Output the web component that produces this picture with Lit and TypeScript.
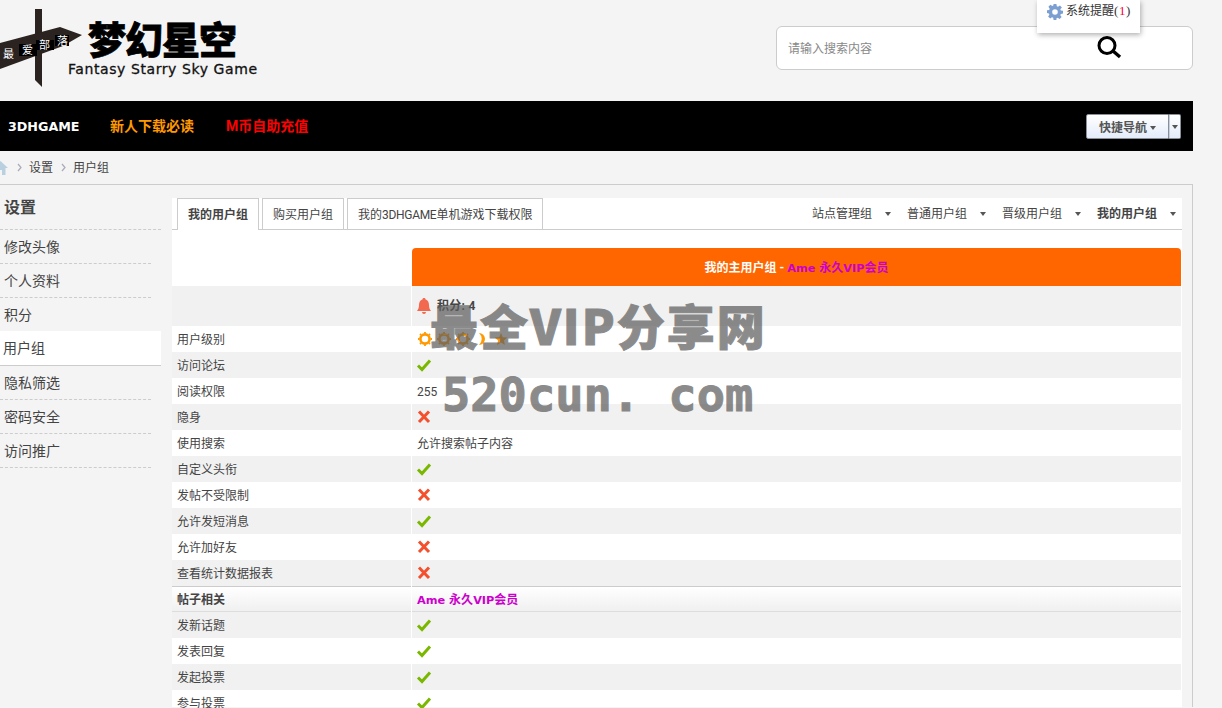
import { LitElement, html, css, svg } from "lit";
import { customElement } from "lit/decorators.js";

const check = html`<svg class="ic" width="16" height="14" viewBox="0 0 16 14"><path d="M2 7.500 L6 11.500 L14 2.500" fill="none" stroke="#7ab800" stroke-width="3"/></svg>`;
const cross = html`<svg class="ic" width="16" height="14" viewBox="0 0 16 14"><path d="M3 1.500 L13 12 M13 1.500 L3 12" fill="none" stroke="#f4502e" stroke-width="3"/></svg>`;

const sun = svg`<circle cx="7" cy="7" r="4.600" fill="none" stroke="#f90" stroke-width="2.600"/><path stroke="#f90" stroke-width="1.800" d="M7 0v1.500M7 12.500v1.500M0 7h1.500M12.500 7h1.500M2 2l1 1M11 11l1 1M12 2l-1 1M3 11l-1 1"/>`;
const levelIcons = html`<span class="levels">
  <svg width="14" height="14" viewBox="0 0 14 14">${sun}</svg>
  <svg width="14" height="14" viewBox="0 0 14 14">${sun}</svg>
  <svg width="14" height="14" viewBox="0 0 14 14">${sun}</svg>
  <svg class="moon" width="12" height="14" viewBox="0 0 12 14"><path d="M2 1 A6 6 0 1 1 2 13 A8 8 0 0 0 2 1Z" fill="#f90"/></svg>
  <svg width="14" height="14" viewBox="0 0 14 14"><path d="M7 1 L8.800 5.200 L13.400 5.500 L9.900 8.400 L11 13 L7 10.500 L3 13 L4.100 8.400 L.6 5.500 L5.200 5.200Z" fill="#f90"/></svg>
</span>`;

type Row = { label: string; value: unknown; gray?: boolean };
const rows: Row[] = [
  { label: "用户级别", value: levelIcons },
  { label: "访问论坛", value: check, gray: true },
  { label: "阅读权限", value: "255" },
  { label: "隐身", value: cross, gray: true },
  { label: "使用搜索", value: "允许搜索帖子内容" },
  { label: "自定义头衔", value: check, gray: true },
  { label: "发帖不受限制", value: cross },
  { label: "允许发短消息", value: check, gray: true },
  { label: "允许加好友", value: cross },
  { label: "查看统计数据报表", value: cross, gray: true },
];
const rows2: Row[] = [
  { label: "发新话题", value: check, gray: true },
  { label: "发表回复", value: check },
  { label: "发起投票", value: check, gray: true },
  { label: "参与投票", value: check },
];

const vipName = html`<span class="mag"><span class="lat">Ame </span>永久<span class="lat">VIP</span>会员</span>`;

@customElement("app-root")
export class AppRoot extends LitElement {
  static styles = css`
    :host { display: block; position: relative; height: 708px; overflow: hidden; background: #f4f4f4; font: 12px/1.5 Roboto, "Noto Sans CJK SC", sans-serif; color: #444; }
    .page { width: 1193px; }
    .head { display: flex; justify-content: space-between; align-items: flex-start; height: 101px; }
    .logo { display: block; }
    .search { box-sizing: border-box; width: 417px; height: 44px; margin-top: 26px; background: #fff; border: 1px solid #ccc; border-radius: 6px; display: flex; align-items: center; padding: 2px 0 0 11px; color: #888; }
    .search span { flex: 1; }
    .search svg { margin-right: 70px; margin-top: -3px; }
    .nav { height: 50px; background: #000; display: flex; align-items: center; padding: 0 12px 0 8px; font-weight: 700; font-size: 14px; }
    .nav .a { color: #fff; width: 102px; font-family: "DejaVu Sans", sans-serif; font-size: 12.700px; padding-top: 2px; }
    .nav .b { color: #f90; width: 116px; margin-top: 1px; }
    .nav .c { color: #f00; margin-top: 1px; }
    .btns { margin-left: auto; display: flex; height: 25px; font-size: 12px; margin-top: 1px; }
    .btn { box-sizing: border-box; border: 1px solid #8a8f98; background: linear-gradient(#fff, #e4ecfa); color: #555; display: flex; align-items: center; justify-content: center; gap: 3px; }
    .btn.m { width: 83px; border-radius: 2px 0 0 2px; padding-top: 2px; }
    .btn.s { width: 12px; border-left: 1px solid #c5cfe0; border-radius: 0 2px 2px 0; }
    .caret { width: 0; height: 0; border: 3px solid transparent; border-top: 4px solid #555; border-bottom: 0; }
    .crumb { height: 33px; display: flex; align-items: center; }
    .crumb svg.home { margin-left: -7px; }
    .crumb .sep { margin: 0 7px 0 9px; }
    .crumb span + .sep { margin-left: 8px; }
    .box { box-sizing: border-box; border-top: 1px solid #ccc; border-right: 1px solid #ccc; height: 523px; display: flex; }
    .side { width: 161px; margin-right: 11px; flex: none; }
    .side h2 { margin: 0; box-sizing: border-box; height: 45px; padding: 12px 0 0 4px; font-size: 16px; line-height: 22px; font-weight: 700; border-bottom: 1px dashed #ccc; }
    .side a { display: block; box-sizing: border-box; height: 34px; width: 151px; padding: 1px 0 0 4px; font-size: 14px; line-height: 33px; border-bottom: 1px dashed #ccc; }
    .side a.plain { border-bottom: 0; height: 33px; }
    .side a.on { width: 161px; height: 35px; background: #fff; border-bottom: 1px solid #ccc; padding-left: 3px; }
    .main { width: 1010px; margin-top: 13px; background: #fff; }
    .tabs { box-sizing: border-box; height: 32px; border-bottom: 1px solid #ccc; display: flex; padding-left: 5px; }
    .tab { box-sizing: border-box; height: 32px; border: 1px solid #ccc; border-bottom: 0; padding: 0 10px; margin-right: 3px; line-height: 32px; white-space: nowrap; }
    .tab.w { width: 82px; text-align: center; padding: 0; }
    .tab.on { font-weight: 700; background: #fff; }
    .tab em { font-style: normal; letter-spacing: -.3px; }
    .groups { margin-left: auto; display: flex; padding-right: 5px; line-height: 30px; }
    .grp { display: flex; align-items: center; width: 95px; }
    .grp:last-child { width: 80px; }
    .grp span { width: 73px; }
    .grp.on span { font-weight: 700; }
    .spacer { height: 18px; }
    .row { display: grid; grid-template-columns: 239px 769px; column-gap: 1px; }
    .row > div { box-sizing: border-box; height: 26px; line-height: 26px; padding: 2px 0 0 5px; display: flex; align-items: center; }
    .row.gray > div { background: #f1f1f1; }
    .row > .title { height: 38px; padding: 2px 0 0; justify-content: center; background: #f60; color: #fff; font-weight: 700; border-radius: 4px 4px 0 0; white-space: pre; }
    .row > .blank { height: 38px; }
    .mag { color: #c0c; font-weight: 700; white-space: pre; }
    .lat { font-family: "DejaVu Sans", sans-serif; font-size: 11.300px; }
    .row.score > div { height: 40px; background: #f1f1f1; padding-top: 0; }
    .row.score .v { font-weight: 700; gap: 6px; letter-spacing: .3px; }
    .row.sec > div { background: linear-gradient(#fff, #f0f0f0); border-top: 1px solid #ccc; border-bottom: 1px solid #ddd; font-weight: 700; }
    .ic { display: block; margin: -2px 0 0 -1px; }
    .levels { display: flex; margin: -2px 0 0 1px; gap: 5px; }
    .moon { margin-left: 2px; }
    .pop { position: absolute; left: 1037px; top: 0; width: 103px; height: 33px; box-sizing: border-box; background: #fff; box-shadow: 1px 2px 5px rgba(0,0,0,.3); padding: 2px 0 0 10px; display: flex; align-items: flex-start; gap: 3px; line-height: 18px; color: #333; }
    .pop svg { margin-top: 2px; }
    .pop i { font-style: normal; color: #f03; }
    .pop em { font-style: normal; letter-spacing: .6px; font-family: "Liberation Serif", serif; font-size: 13px; }
    .mark { position: absolute; left: 430px; top: 294px; color: #5f5f5f; opacity: .72; pointer-events: none; white-space: nowrap; -webkit-text-stroke: 1px #5f5f5f; }
    .mark .l1 { font: 900 48px/60px "Noto Sans CJK SC", sans-serif; letter-spacing: 2px; }
    .mark .l2 { font: 700 47px/60px "DejaVu Sans Mono", monospace; margin: 11px 0 0 12px; }
  `;

  private logo() {
    return html`<svg class="logo" width="262" height="101" viewBox="0 0 262 101">
      <path d="M35 9 L42 9 L42 87 L35 80Z" fill="#2a2320"/>
      <path d="M0 43 L60 27 L82 35 L63 46 L0 69Z" fill="#2a2320"/>
      <g fill="#000">
        <rect x="19" y="44" width="18" height="12"/><rect x="36" y="40" width="18" height="10"/><rect x="55" y="35" width="14" height="11"/>
      </g>
      <g fill="#fff" font-size="11" font-family="Noto Sans CJK SC">
        <text x="3" y="58">最</text><text x="22" y="54">爱</text><text x="39" y="49">部</text><text x="57" y="45">落</text>
      </g>
      <text x="88" y="54" font-size="38" font-weight="900" font-family="Noto Sans CJK SC" fill="#000" stroke="#000" stroke-width=".8" textLength="149">梦幻星空</text>
      <text x="68" y="74" font-size="14" font-family="DejaVu Sans" fill="#111" stroke="#111" stroke-width=".3" textLength="189" lengthAdjust="spacing">Fantasy Starry Sky Game</text>
    </svg>`;
  }

  private row(r: Row) {
    return html`<div class="row ${r.gray ? "gray" : ""}"><div>${r.label}</div><div>${r.value}</div></div>`;
  }

  render() {
    const gear = html`<svg width="16" height="16" viewBox="0 0 16 16"><path fill-rule="evenodd" fill="#7b9fd0" d="M6.600 0h2.800l.4 2.200 1.200.5L12.900 1.400 14.900 3.400 13.300 5.200l.5 1.200 2.200.4v2.800l-2.200.4-.5 1.200 1.300 1.900-2 2-1.900-1.300-1.200.5L9.400 16H6.600l-.4-2.200-1.200-.5-1.900 1.300-2-2 1.300-1.900-.5-1.200L0 9.100V6.300l2.200-.4.5-1.200L1.400 2.800l2-2 1.900 1.300 1-.5ZM8 5.200a2.800 2.800 0 1 0 0 5.600 2.800 2.800 0 0 0 0-5.600Z"/></svg>`;
    const sep = html`<svg class="sep" width="5" height="9" viewBox="0 0 5 9"><path d="M1 1l3 3.500L1 8" fill="none" stroke="#aab" stroke-width="1.200"/></svg>`;
    return html`
      <div class="page">
        <div class="head">
          ${this.logo()}
          <div class="search"><span>请输入搜索内容</span>
            <svg width="25" height="23" viewBox="0 0 25 23"><circle cx="10" cy="9.500" r="8" fill="none" stroke="#000" stroke-width="3"/><path d="M16 15l7 6" stroke="#000" stroke-width="3.400"/></svg>
          </div>
        </div>
        <div class="nav">
          <span class="a">3DHGAME</span><span class="b">新人下载必读</span><span class="c">M币自助充值</span>
          <div class="btns">
            <div class="btn m">快捷导航<b class="caret"></b></div>
            <div class="btn s"><b class="caret"></b></div>
          </div>
        </div>
        <div class="crumb">
          <svg class="home" width="15" height="14" viewBox="0 0 15 14"><path d="M7.500 0L15 7h-2.500v7h-3.500V9H6v5H2.500V7H0Z" fill="#b9d0e0"/></svg>
          ${sep}<span>设置</span>${sep}<span>用户组</span>
        </div>
        <div class="box">
          <div class="side">
            <h2>设置</h2>
            <a>修改头像</a><a>个人资料</a><a class="plain">积分</a><a class="on">用户组</a>
            <a>隐私筛选</a><a>密码安全</a><a>访问推广</a>
          </div>
          <div class="main">
            <div class="tabs">
              <div class="tab w on">我的用户组</div><div class="tab w">购买用户组</div><div class="tab">我的<em>3DHGAME</em>单机游戏下载权限</div>
              <div class="groups">
                <div class="grp"><span>站点管理组</span><b class="caret"></b></div>
                <div class="grp"><span>普通用户组</span><b class="caret"></b></div>
                <div class="grp"><span>晋级用户组</span><b class="caret"></b></div>
                <div class="grp on"><span>我的用户组</span><b class="caret"></b></div>
              </div>
            </div>
            <div class="spacer"></div>
            <div class="row"><div class="blank"></div><div class="title">我的主用户组 - ${vipName}</div></div>
            <div class="row score"><div></div><div class="v">
              <svg width="14" height="17" viewBox="0 0 14 17"><path d="M7 0c1 0 1.600.7 1.600 1.500C11 2.300 12 4.500 12 7c0 3 .8 4.500 2 6H0c1.200-1.500 2-3 2-6 0-2.500 1-4.700 3.400-5.500C5.400.7 6 0 7 0ZM5 14h4a2 2 0 0 1-4 0Z" fill="#f2694f"/></svg>
              <span>积分: 4</span></div></div>
            ${rows.map((r) => this.row(r))}
            <div class="row sec"><div>帖子相关</div><div>${vipName}</div></div>
            ${rows2.map((r) => this.row(r))}
          </div>
        </div>
      </div>
      <div class="pop">${gear}<span>系统提醒<em>(<i>1</i>)</em></span></div>
      <div class="mark"><div class="l1">最全VIP分享网</div><div class="l2">520cun. com</div></div>
    `;
  }
}
